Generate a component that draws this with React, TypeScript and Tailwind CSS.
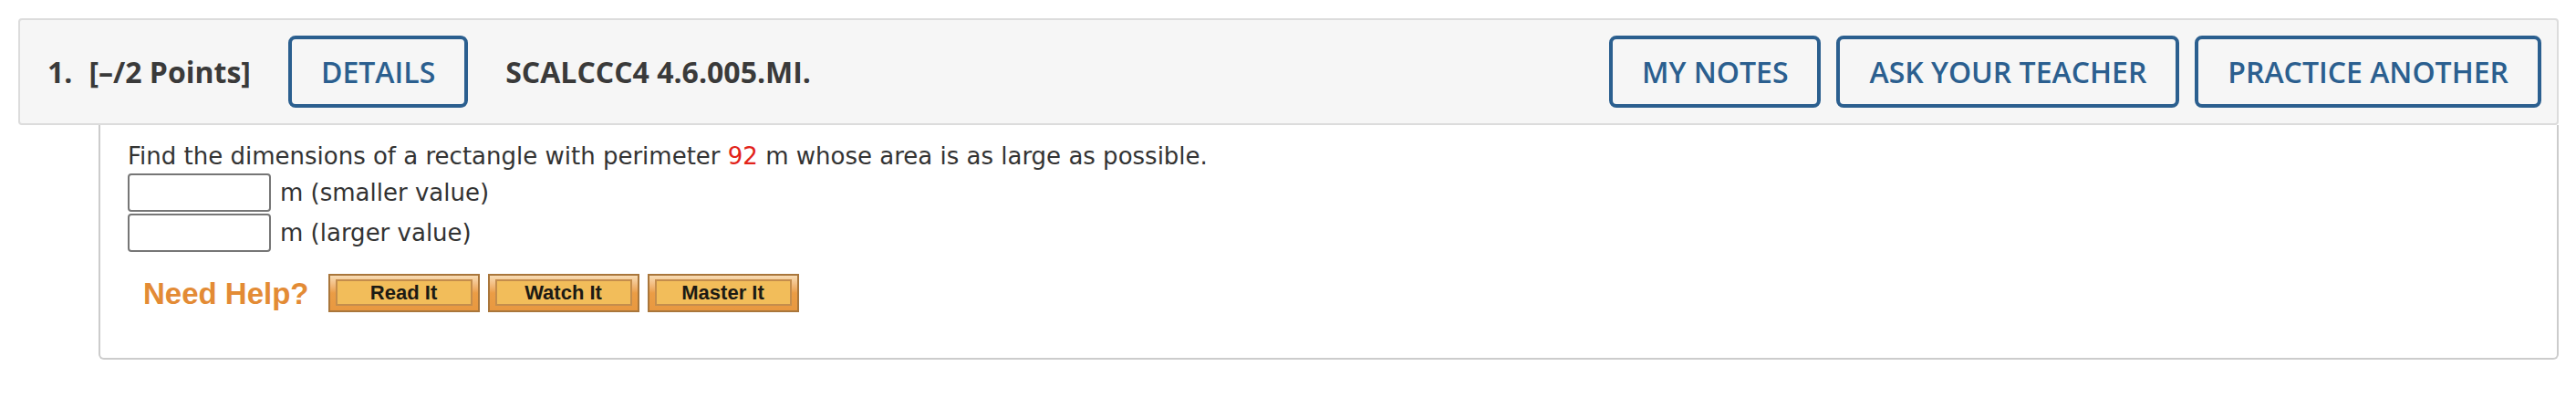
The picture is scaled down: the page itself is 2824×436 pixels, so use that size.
import React from "react";

const headerFont = { fontFamily: '"Open Sans", "Liberation Sans", sans-serif' };

function OutlineButton({ label }: { label: string }) {
  return (
    <button className="h-[79px] rounded-[8px] border-[4px] border-[#2b5f8f] px-[32px] text-[32px] font-semibold leading-none text-[#2b5f8f]">
      {label}
    </button>
  );
}

function HelpButton({ label }: { label: string }) {
  return (
    <div className="h-[42px] w-[166px] border-2 border-[#a9763b] bg-gradient-to-b from-[#f8dcb4] via-[#eb9d45] to-[#e89840] px-[6px] pt-[4px] pb-[5px]">
      <div className="flex h-full items-center justify-center border-2 border-[#c48d4c] bg-[#f2bd5a] font-['Liberation_Sans',Arial,sans-serif] text-[22px] font-bold leading-none text-[#1b1a14]">
        {label}
      </div>
    </div>
  );
}

export default function App() {
  return (
    <div className="min-h-[436px] w-[2824px] bg-white pt-[20px] pl-[20px]">
      {/* Question header */}
      <div
        className="flex h-[117px] w-[2785px] items-center rounded-[4px] border-2 border-[#dcdcdc] bg-[#f6f6f6] pl-[30px] pr-[17px] text-[#3a3a3a]"
        style={headerFont}
      >
        <span className="text-[32px] font-bold">1.</span>
        <span className="ml-[18px] text-[32px] font-bold">[–/2 Points]</span>
        <div className="ml-[41px]">
          <OutlineButton label="DETAILS" />
        </div>
        <span className="ml-[41px] text-[32px] font-bold">SCALCCC4 4.6.005.MI.</span>
        <div className="ml-auto flex gap-[17px]">
          <OutlineButton label="MY NOTES" />
          <OutlineButton label="ASK YOUR TEACHER" />
          <OutlineButton label="PRACTICE ANOTHER" />
        </div>
      </div>

      {/* Question body */}
      <div className="ml-[88px] h-[257px] w-[2697px] rounded-b-[6px] border-2 border-t-0 border-[#cccccc] pl-[30px] pt-[16px] font-['DejaVu_Sans',Verdana,sans-serif] text-[26px] text-[#333333]">
        <p className="leading-[36px]">
          Find the dimensions of a rectangle with perimeter{" "}
          <span className="text-[#e2231a]">92</span> m whose area is as large as possible.
        </p>
        <div className="mt-[1px] flex flex-col gap-[2px]">
          <div className="flex items-center gap-[10px]">
            <div className="h-[42px] w-[157px] rounded-[4px] border-2 border-[#767676] bg-white" />
            <span>m (smaller value)</span>
          </div>
          <div className="flex items-center gap-[10px]">
            <div className="h-[42px] w-[157px] rounded-[4px] border-2 border-[#767676] bg-white" />
            <span>m (larger value)</span>
          </div>
        </div>
        <div className="mt-[24px] flex items-center pl-[17px]">
          <span className="font-['Liberation_Sans',Arial,sans-serif] text-[33px] font-bold leading-none text-[#e38b35]">
            Need Help?
          </span>
          <div className="ml-[21px] flex gap-[9px]">
            <HelpButton label="Read It" />
            <HelpButton label="Watch It" />
            <HelpButton label="Master It" />
          </div>
        </div>
      </div>
    </div>
  );
}
